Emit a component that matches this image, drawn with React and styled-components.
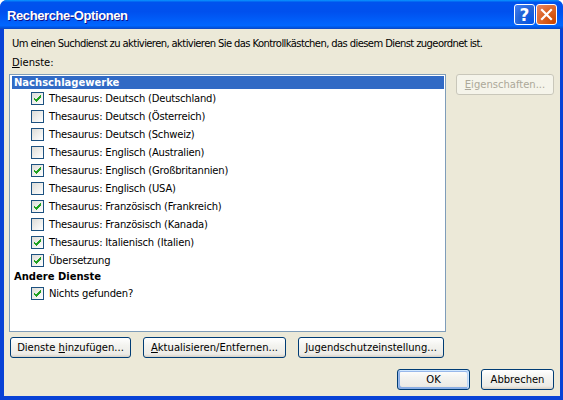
import styled, { createGlobalStyle } from "styled-components";

const GlobalStyle = createGlobalStyle`
  html, body {
    margin: 0;
    padding: 0;
    background: #ffffff;
  }
  * {
    box-sizing: border-box;
  }
`;

const FONT = `"DejaVu Sans", "Liberation Sans", sans-serif`;

const services = [
  { label: "Thesaurus: Deutsch (Deutschland)", checked: true },
  { label: "Thesaurus: Deutsch (Österreich)", checked: false },
  { label: "Thesaurus: Deutsch (Schweiz)", checked: false },
  { label: "Thesaurus: Englisch (Australien)", checked: false },
  { label: "Thesaurus: Englisch (Großbritannien)", checked: true },
  { label: "Thesaurus: Englisch (USA)", checked: false },
  { label: "Thesaurus: Französisch (Frankreich)", checked: true },
  { label: "Thesaurus: Französisch (Kanada)", checked: false },
  { label: "Thesaurus: Italienisch (Italien)", checked: true },
  { label: "Übersetzung", checked: true },
];

const CheckMark = () => (
  <svg width="13" height="13" viewBox="0 0 13 13">
    <path
      d="M3 5.5 L5.2 7.7 L9.8 3.1 L9.8 5.3 L5.2 9.9 L3 7.7 Z"
      fill="#21A121"
      shapeRendering="crispEdges"
    />
  </svg>
);

const App = () => {
  return (
    <>
      <GlobalStyle />
      <Window>
        <TitleBar>
          <Title>Recherche-Optionen</Title>
          <Controls>
            <HelpButton>?</HelpButton>
            <CloseButton>
              <svg width="13" height="13" viewBox="0 0 13 13">
                <path
                  d="M2 2 L11 11 M11 2 L2 11"
                  stroke="#ffffff"
                  strokeWidth="2.2"
                  strokeLinecap="square"
                />
              </svg>
            </CloseButton>
          </Controls>
        </TitleBar>

        <Body>
          <Intro>
            Um einen Suchdienst zu aktivieren, aktivieren Sie das
            Kontrollkästchen, das diesem Dienst zugeordnet ist.
          </Intro>
          <Label>
            <u>D</u>ienste:
          </Label>

          <Main>
            <ListColumn>
              <ListBox>
                <GroupHeader $selected>Nachschlagewerke</GroupHeader>
                {services.map((s) => (
                  <Item key={s.label}>
                    <Box>{s.checked && <CheckMark />}</Box>
                    <span>{s.label}</span>
                  </Item>
                ))}
                <GroupHeader>Andere Dienste</GroupHeader>
                <Item>
                  <Box>
                    <CheckMark />
                  </Box>
                  <span>Nichts gefunden?</span>
                </Item>
              </ListBox>

              <ButtonRow>
                <Button $width={121}>
                  Dienste <u>h</u>inzufügen...
                </Button>
                <Button $width={143}>
                  <u>A</u>ktualisieren/Entfernen...
                </Button>
                <Button $width={146}>
                  <u>J</u>ugendschutzeinstellung...
                </Button>
              </ButtonRow>
            </ListColumn>

            <SideColumn>
              <Button $width={98} disabled>
                <u>E</u>igenschaften...
              </Button>
            </SideColumn>
          </Main>

          <Footer>
            <Button $width={73} $default>
              OK
            </Button>
            <Button $width={73}>Abbrechen</Button>
          </Footer>
        </Body>
      </Window>
    </>
  );
};

const Window = styled.div`
  width: 563px;
  height: 400px;
  display: flex;
  flex-direction: column;
  background: #0842d6;
  border-radius: 7px 7px 0 0;
  overflow: hidden;
  font-family: ${FONT};
  font-size: 10px;
  color: #000;
`;

const TitleBar = styled.div`
  height: 29px;
  flex: none;
  display: flex;
  align-items: center;
  justify-content: space-between;
  padding: 0 6px 0 7px;
  background: linear-gradient(
    180deg,
    #0997ff 0%,
    #0053ee 8%,
    #0050ee 40%,
    #0066ff 88%,
    #0055e0 95%,
    #0f45c0 100%
  );
`;

const Title = styled.div`
  font-family: "Liberation Sans", sans-serif;
  font-weight: bold;
  font-size: 13px;
  letter-spacing: -0.4px;
  color: #ffffff;
  text-shadow: 1px 1px #0f1089;
  padding-top: 1px;
`;

const Controls = styled.div`
  display: flex;
  gap: 1px;
`;

const CaptionButton = styled.div`
  width: 21px;
  height: 21px;
  border: 1px solid #ffffff;
  border-radius: 3px;
  display: flex;
  align-items: center;
  justify-content: center;
  color: #ffffff;
`;

const HelpButton = styled(CaptionButton)`
  background: radial-gradient(
    circle at 90% 90%,
    #0054e9 0%,
    #2263d5 55%,
    #4480f6 100%
  );
  font-family: "DejaVu Sans", sans-serif;
  font-weight: bold;
  font-size: 17px;
`;

const CloseButton = styled(CaptionButton)`
  background: radial-gradient(
    circle at 90% 90%,
    #cc4600 0%,
    #dc6527 55%,
    #e7896b 100%
  );
`;

const Body = styled.div`
  flex: 1;
  margin: 0 3px 4px 4px;
  background: #ece9d8;
  padding: 8px 6px 0 5px;
  display: flex;
  flex-direction: column;
`;

const Intro = styled.div`
  line-height: 13px;
  padding-left: 3px;
  letter-spacing: -0.6px;
  white-space: nowrap;
`;

const Label = styled.div`
  margin-top: 6px;
  line-height: 13px;
  padding-left: 3px;
`;

const Main = styled.div`
  margin-top: 5px;
  display: flex;
  gap: 10px;
`;

const ListColumn = styled.div`
  display: flex;
  flex-direction: column;
  width: 437px;
`;

const ListBox = styled.div`
  height: 258px;
  background: #ffffff;
  border: 1px solid #7f9db9;
  padding: 1px 1px 0 2px;
  display: flex;
  flex-direction: column;
`;

const GroupHeader = styled.div`
  height: ${(p) => (p.$selected ? 13 : 15)}px;
  line-height: ${(p) => (p.$selected ? 13 : 15)}px;
  padding-left: 2px;
  font-weight: bold;
  background: ${(p) => (p.$selected ? "#316ac5" : "transparent")};
  color: ${(p) => (p.$selected ? "#ffffff" : "#000000")};
`;

const Item = styled.div`
  height: 18px;
  display: flex;
  align-items: center;
  padding-left: 19px;
  gap: 5px;
  letter-spacing: -0.2px;
`;

const Box = styled.div`
  width: 13px;
  height: 13px;
  border: 1px solid #1c5180;
  background: linear-gradient(135deg, #dcdcd7 0%, #ffffff 100%);
  display: flex;
  align-items: center;
  justify-content: center;

  svg {
    margin: -1px;
  }
`;

const ButtonRow = styled.div`
  margin-top: 5px;
  display: flex;
  justify-content: space-between;
  padding: 0 2px 0 1px;
`;

const SideColumn = styled.div`
  display: flex;
  flex-direction: column;
`;

const Button = styled.button`
  width: ${(p) => p.$width}px;
  height: 21px;
  padding: 0;
  font-family: ${FONT};
  font-size: 10px;
  color: #000;
  border: 1px solid #003c74;
  border-radius: 3px;
  background: linear-gradient(180deg, #ffffff 0%, #f3f3ef 40%, #ecebe6 85%, #d6d0c5 100%);
  box-shadow: ${(p) =>
    p.$default
      ? "inset -1px 1px #cee7ff, inset 1px 2px #98b8ea, inset -2px 2px #bcd4f6, inset 1px -1px #89ade4, inset 2px -2px #89ade4"
      : "none"};

  &:disabled {
    border-color: #c9c7ba;
    background: #f5f4ea;
    color: #aca899;
  }
`;

const Footer = styled.div`
  margin-top: 11px;
  display: flex;
  justify-content: flex-end;
  gap: 11px;
`;

export default App;
